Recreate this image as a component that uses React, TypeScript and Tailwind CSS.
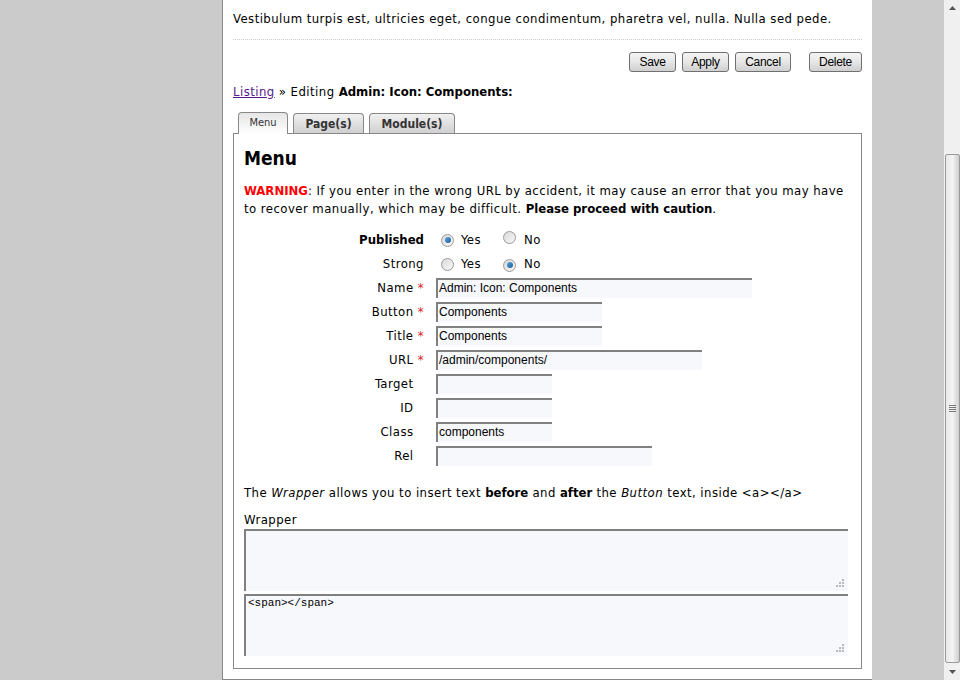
import React from 'react'

const tahoma = { fontFamily: '"DejaVu Sans Condensed", "DejaVu Sans", sans-serif' }

const Radio = ({ checked }: { checked?: boolean }) => (
  <span className="inline-flex items-center justify-center w-[13px] h-[13px] rounded-full border border-[#9a9a9a] bg-gradient-to-br from-[#d9d9d9] to-[#f8f8f8]">
    {checked && <span className="w-[6px] h-[6px] rounded-full bg-gradient-to-br from-[#5aa6dc] to-[#1c5e9a]" />}
  </span>
)

const Btn = ({ children, className = '' }: { children: React.ReactNode; className?: string }) => (
  <button
    className={`h-[20px] rounded-[3px] border border-[#707070] bg-gradient-to-b from-[#f4f4f4] via-[#e6e6e6] to-[#cfcfcf] text-[12px] text-black leading-none tracking-[-0.3px] ${className}`}
    style={{ fontFamily: '"Liberation Sans", Arial, sans-serif' }}
  >
    {children}
  </button>
)

const Grip = () => (
  <svg width="10" height="10" viewBox="0 0 10 10" className="absolute right-[3px] bottom-[3px]">
    {[[7, 1], [4, 4], [7, 4], [1, 7], [4, 7], [7, 7]].map(([x, y]) => (
      <rect key={`${x}-${y}`} x={x} y={y} width="2" height="2" fill="#b8b8b8" />
    ))}
  </svg>
)

type Field = { label: string; req?: boolean; value: string; w: string }

const fields: Field[] = [
  { label: 'Name', req: true, value: 'Admin: Icon: Components', w: 'w-[316px]' },
  { label: 'Button', req: true, value: 'Components', w: 'w-[166px]' },
  { label: 'Title', req: true, value: 'Components', w: 'w-[166px]' },
  { label: 'URL', req: true, value: '/admin/components/', w: 'w-[266px]' },
  { label: 'Target', value: '', w: 'w-[116px]' },
  { label: 'ID', value: '', w: 'w-[116px]' },
  { label: 'Class', value: 'components', w: 'w-[116px]' },
  { label: 'Rel', value: '', w: 'w-[216px]' },
]

const Scrollbar = () => (
  <div className="w-[16px] h-[680px] bg-[#f0f0f0] flex flex-col items-center">
    <div className="h-[16px] flex items-center justify-center">
      <svg width="7" height="4" viewBox="0 0 7 4"><path d="M0 4 L3.5 0 L7 4 Z" fill="#555" /></svg>
    </div>
    <div className="h-[138px]" />
    <div className="w-[15px] h-[509px] border border-[#9a9a9a] rounded-[2px] bg-gradient-to-r from-[#e8e8e8] via-[#f4f4f4] to-[#cfcfcf] flex items-center justify-center">
      <div className="flex flex-col gap-[1px]">
        <span className="block w-[7px] h-[1px] bg-[#777]" />
        <span className="block w-[7px] h-[1px] bg-[#777]" />
        <span className="block w-[7px] h-[1px] bg-[#777]" />
        <span className="block w-[7px] h-[1px] bg-[#777]" />
      </div>
    </div>
    <div className="flex-1" />
    <div className="h-[16px] flex items-center justify-center">
      <svg width="7" height="4" viewBox="0 0 7 4"><path d="M0 0 L3.5 4 L7 0 Z" fill="#555" /></svg>
    </div>
  </div>
)

export default function App() {
  return (
    <div className="w-[960px] h-[680px] overflow-hidden bg-[#cbcbcb] flex text-[13px] tracking-[0.45px] text-black" style={tahoma}>
      <div className="w-[222px]" />
      <div className="w-[650px] h-[680px] bg-white border-l border-b border-[#888] pl-[10px] pr-[10px]">
        <p className="pt-[10px] leading-[18px]">
          Vestibulum turpis est, ultricies eget, congue condimentum, pharetra vel, nulla. Nulla sed pede.
        </p>
        <div className="mt-[11px] border-b border-dotted border-[#c8c8c8]" />
        <div className="mt-[12px] flex justify-end">
          <Btn className="w-[47px]">Save</Btn>
          <Btn className="w-[47px] ml-[6px]">Apply</Btn>
          <Btn className="w-[56px] ml-[6px]">Cancel</Btn>
          <Btn className="w-[53px] ml-[18px]">Delete</Btn>
        </div>
        <div className="mt-[11px] leading-[18px]">
          <a href="#" className="text-[#551a8b] underline">Listing</a> » Editing <b className="tracking-normal">Admin: Icon: Components:</b>
        </div>
        <div className="mt-[11px] flex items-end pl-[5px] h-[21px] tracking-normal">
          <div className="h-[22px] w-[50px] -mb-[1px] rounded-t-[4px] border border-b-0 border-[#888] bg-gradient-to-b from-[#e6e6e6] to-white flex items-center justify-center text-[11px] text-[#333] relative z-10">
            Menu
          </div>
          <div className="ml-[5px] h-[20px] w-[71px] rounded-t-[4px] border border-b-0 border-[#888] bg-gradient-to-b from-[#f0f0f0] to-[#d0d0d0] flex items-center justify-center text-[12px] font-bold text-[#333]">
            Page(s)
          </div>
          <div className="ml-[5px] h-[20px] w-[86px] rounded-t-[4px] border border-b-0 border-[#888] bg-gradient-to-b from-[#f0f0f0] to-[#d0d0d0] flex items-center justify-center text-[12px] font-bold text-[#333]">
            Module(s)
          </div>
        </div>
        <div className="border border-[#888] h-[536px] px-[10px]">
          <h2 className="mt-[13px] text-[19px] font-bold leading-[22px] tracking-normal">Menu</h2>
          <p className="mt-[13px] leading-[18px]">
            <b className="text-[#ff0000] tracking-normal">WARNING</b>: If you enter in the wrong URL by accident, it may cause an error that you may have to recover manually, which may be difficult. <b className="tracking-normal">Please proceed with caution</b>.
          </p>
          <div className="mt-[10px] flex flex-col">
            <div className="h-[24px] flex items-center">
              <div className="w-[180px] text-right font-bold tracking-normal">Published</div>
              <div className="ml-[17px] flex items-center">
                <Radio checked />
                <span className="ml-[7px]">Yes</span>
                <span className="ml-[22px]"><Radio /></span>
                <span className="ml-[8px]">No</span>
              </div>
            </div>
            <div className="h-[24px] flex items-center">
              <div className="w-[180px] text-right">Strong</div>
              <div className="ml-[17px] flex items-center">
                <Radio />
                <span className="ml-[7px]">Yes</span>
                <span className="ml-[22px]"><Radio checked /></span>
                <span className="ml-[8px]">No</span>
              </div>
            </div>
            {fields.map((f) => (
              <div key={f.label} className="h-[24px] flex items-center">
                <div className="w-[180px] text-right">
                  {f.label}
                  {f.req && <span className="text-[#e0191f]"> *</span>}
                  {!f.req && <span className="invisible"> *</span>}
                </div>
                <div
                  className={`ml-[12px] h-[20px] ${f.w} border-t-2 border-l-2 border-[#808080] bg-[#f7f8fc] pl-[1px] text-[12px] leading-[17px] tracking-normal`}
                  style={{ fontFamily: '"Liberation Sans", Arial, sans-serif' }}
                >
                  {f.value}
                </div>
              </div>
            ))}
          </div>
          <p className="mt-[16px] leading-[18px]">
            The <i>Wrapper</i> allows you to insert text <b className="tracking-normal">before</b> and <b className="tracking-normal">after</b> the <i>Button</i> text, inside &lt;a&gt;&lt;/a&gt;
          </p>
          <div className="mt-[9px] leading-[18px]">Wrapper</div>
          <div className="relative w-[604px] h-[62px] border-t-2 border-l-2 border-[#808080] bg-[#f7f8fc]">
            <Grip />
          </div>
          <div
            className="relative w-[604px] mt-[3px] h-[62px] border-t-2 border-l-2 border-[#808080] bg-[#f7f8fc] pl-[2px] text-[11px] leading-[14px] tracking-normal"
            style={{ fontFamily: '"Liberation Mono", "Courier New", monospace' }}
          >
            &lt;span&gt;&lt;/span&gt;
            <Grip />
          </div>
        </div>
      </div>
      <div className="w-[72px]" />
      <Scrollbar />
    </div>
  )
}
